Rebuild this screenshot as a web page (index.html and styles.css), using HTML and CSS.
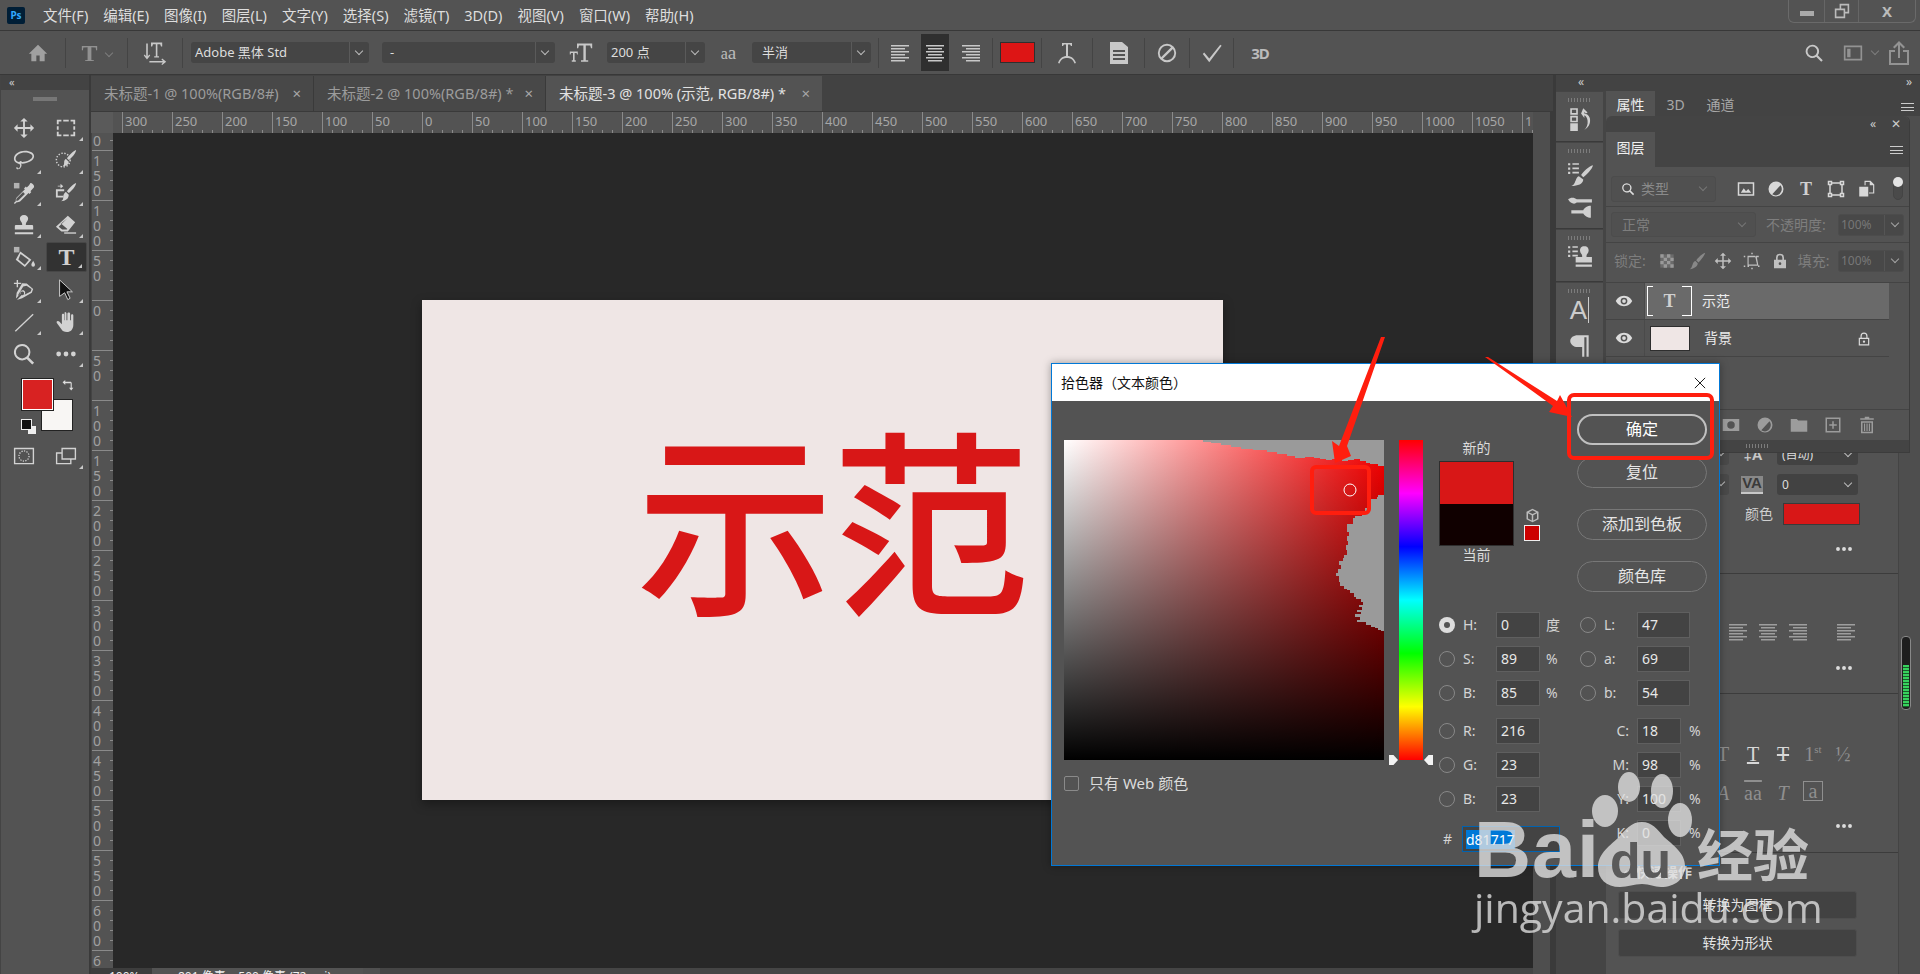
FILE: index.html
```html
<!DOCTYPE html>
<html lang="zh">
<head>
<meta charset="utf-8">
<title>Photoshop 拾色器</title>
<link rel="stylesheet" href="styles.css">
</head>
<body>
<svg class="sprite" aria-hidden="true">
  <symbol id="i-home" viewBox="0 0 24 24"><path d="M12 2 23 13h-3v9h-6v-7h-4v7H4v-9H1z"/></symbol>
  <symbol id="i-orient" viewBox="0 0 30 30"><path d="M4 3h2v16l2-2 1 1-4 5-4-5 1-1 2 2zM10 2h14v5h-1.500l-1-3H18v15h2v1.500h-6V19h2V4h-3.500l-1 3H10zM8 25h17l-2-2 1-1 5 4-5 4-1-1 2-2H8z"/></symbol>
  <symbol id="i-size" viewBox="0 0 30 30"><path d="M10 3h19v6h-1.500l-1-3.500H21V24h3v2h-9v-2h3V5.500h-5.500l-1 3.500H10zM1 13h10v4h-1l-.5-2H7v9h1.500v2h-5v-2H5v-9H2.500L2 17H1z"/></symbol>
  <symbol id="i-alignl" viewBox="0 0 20 20"><path d="M1 2h18v1.500H1zM1 5h14v1.500H1zM1 8h18v1.500H1zM1 11h14v1.500H1zM1 14h18v1.500H1zM1 17h14v1.500H1z"/></symbol>
  <symbol id="i-alignc" viewBox="0 0 20 20"><path d="M1 2h18v1.500H1zM3 5h14v1.500H3zM1 8h18v1.500H1zM3 11h14v1.500H3zM1 14h18v1.500H1zM3 17h14v1.500H3z"/></symbol>
  <symbol id="i-alignr" viewBox="0 0 20 20"><path d="M1 2h18v1.500H1zM5 5h14v1.500H5zM1 8h18v1.500H1zM5 11h14v1.500H5zM1 14h18v1.500H1zM5 17h14v1.500H5z"/></symbol>
  <symbol id="i-warp" viewBox="0 0 24 24"><path d="M7 2h10v3h-1l-1-1.500h-2v11.500h-2V3.500H9L8 5H7zM3 22c2-6 6-7 9-7s7 1 9 7l-1.500.5C18 18 15 17 12 17s-6 1-7.500 5.500z"/></symbol>
  <symbol id="i-panel" viewBox="0 0 24 24"><path d="M3 1h12l6 5v17H3zM6 9v2h12V9zm0 4v2h12v-2zm0 4v2h12v-2z" fill-rule="evenodd"/></symbol>
  <symbol id="i-cancel" viewBox="0 0 24 24"><path d="M12 2a10 10 0 1 0 0 20 10 10 0 0 0 0-20zm0 2.200c1.700 0 3.200.5 4.500 1.400L5.600 16.500A7.800 7.800 0 0 1 12 4.200zm0 15.600c-1.700 0-3.200-.5-4.500-1.400L18.400 7.500A7.800 7.800 0 0 1 12 19.800z"/></symbol>
  <symbol id="i-check" viewBox="0 0 24 24"><path d="M2 13l1.500-1.500L9 18 21 3l1.500 1.200L9 22z"/></symbol>
  <symbol id="i-search" viewBox="0 0 24 24"><path d="M10 2a8 8 0 1 0 4.700 14.500l6 6 1.800-1.800-6-6A8 8 0 0 0 10 2zm0 2.200a5.800 5.800 0 1 1 0 11.600 5.800 5.800 0 0 1 0-11.600z"/></symbol>
  <symbol id="i-work" viewBox="0 0 24 24"><path d="M1 3h22v18H1zm2 2v14h18V5zm2 2h4v10H5z" fill-rule="evenodd"/></symbol>
  <symbol id="i-share" viewBox="0 0 24 24"><path d="M12 0l6 6-1.500 1.500L13 4v13h-2V4L7.500 7.500 6 6zM2 9h6v2H4v11h16V11h-4V9h6v15H2z"/></symbol>
  <symbol id="i-restore" viewBox="0 0 20 20"><path d="M7 1h12v12h-5v6H1V7h6zm2 2v4h5v4h3V3zM3 9v8h9V9z" fill-rule="evenodd"/></symbol>
  <symbol id="i-move" viewBox="0 0 24 24"><path d="M12 1l4 4h-3v6h6V8l4 4-4 4v-3h-6v6h3l-4 4-4-4h3v-6H5v3l-4-4 4-4v3h6V5H8z"/></symbol>
  <symbol id="i-marquee" viewBox="0 0 24 24"><path d="M2 3h5v2H4v3H2zm7 0h6v2H9zm8 0h5v5h-2V5h-3zM2 10h2v4H2zm18 0h2v4h-2zM2 16h2v3h3v2H2zm18 0h2v5h-5v-2h3zM9 19h6v2H9z"/></symbol>
  <symbol id="i-lasso" viewBox="0 0 24 24"><path d="M13 2c6 0 10 2.500 10 6 0 4.500-7 8-13 8-.4 0-.8 0-1.200-.1.600 1 .7 2.300.2 3.300-.5 1.600-2 3-3.500 3S3 21 4 19.500l1.200.8c-.5.600 0 .9.500.9.800 0 1.700-.9 2-2 .3-1 0-2-.8-2.800C4 15.500 1 13.500 1 10.500 1 5.500 7 2 13 2zm0 1.800c-5 0-10.200 3-10.200 6.700 0 2 1.800 3.500 4.200 3.800L7 14c.6-1 2-1.200 2.600-.2l.4.400c5 0 11.200-3 11.200-6.200 0-2.300-3.500-4.200-8.200-4.200z"/></symbol>
  <symbol id="i-qsel" viewBox="0 0 24 24"><circle cx="9" cy="12" r="7.500" fill="none" stroke="currentColor" stroke-width="1.600" stroke-dasharray="1.500 1.800"/><path d="M23 1c0 3-5 9-8 11l-2-2c2-3 7-8 10-9zM12 11l3 3c0 3-3 5-7 5 2-1 2-3 2-5 0-1 1-3 2-3z"/></symbol>
  <symbol id="i-dropper" viewBox="0 0 24 24"><path d="M19 1c2 0 4 2 4 4 0 1-1 2-2 3l-2 2 1 1-2 2-1-1-9 9c-1 1-3 1-4 1l-2 2-1-1 2-2c0-1 0-3 1-4l9-9-1-1 2-2 1 1 2-2c1-1 2-3 2-3zM11 11l-7 7c-.5.5-.5 1.500-.5 2.500 1 0 2 0 2.500-.5l7-7z"/><path d="M1 1h6v6H1z" opacity=".75"/></symbol>
  <symbol id="i-heal" viewBox="0 0 24 24"><path d="M23 1c0 3-5 9-8 11l-2-2c2-3 7-8 10-9zM12 11l3 3c0 4-3 7-9 7 3-1 3-3 3-5 0-2 2-5 3-5z"/><path d="M1 8h9v2H3v5h6v2H1zM6 2l3 2.500L6 7V5H3V4h3z"/></symbol>
  <symbol id="i-stamp" viewBox="0 0 24 24"><path d="M12 1c3 0 4.500 2 4.500 4 0 3-2.500 4-2.500 6v1h7c1 0 1 1 1 2v3H2v-3c0-1 0-2 1-2h7v-1c0-2-2.500-3-2.500-6 0-2 1.500-4 4.500-4zM2 20h20v2H2z"/></symbol>
  <symbol id="i-erase" viewBox="0 0 24 24"><path d="M14 2l8 7-8 10H7l-6-5zM13.500 4.500 4 13.800l3.800 3.200H13l.5-.6-7-6-.5.500z" fill-rule="evenodd"/><path d="M10 20h13v1.500H10z"/></symbol>
  <symbol id="i-bucket" viewBox="0 0 24 24"><path d="M8 6l12 9-7 8-10-8zM8.300 8.700 5.800 14.700l7 5.800 4.500-5.200z" fill-rule="evenodd"/><path d="M22 16c1 2 2 3 2 4.500a2 2 0 0 1-4 0c0-1.500 1-2.500 2-4.500z"/><path d="M1 1h6v6H1z" opacity=".75"/></symbol>
  <symbol id="i-pen" viewBox="0 0 24 24"><path d="M15 5l7 6-1.500 4L10 21l-6 2 .5-.5 5-5a2 2 0 1 0-1.300-1.300l-5 5L4 15l6-10.500zM14.800 7.300l-3.600 1L6 16.500l-.5 2 2-2a3.500 3.500 0 0 1 4.200-4.200 3.500 3.500 0 0 1 .9 4.800l6.800-3.500.8-2.700z" fill-rule="evenodd"/><path d="M4 1h1.500v3H9v1.500H5.500V9H4V5.500H1V4h3z"/></symbol>
  <symbol id="i-arrow" viewBox="0 0 24 24"><path d="M5 1l14 13h-6l3.500 7-2.500 1.500-3.500-7.500L5 19z" fill="#111" stroke="#d8d8d8" stroke-width="1"/></symbol>
  <symbol id="i-line" viewBox="0 0 24 24"><path d="M2 21.500 21.500 3l1 1L3 22.500z"/></symbol>
  <symbol id="i-hand" viewBox="0 0 24 24"><path d="M11 1c1 0 1.500 1 1.500 1.500V10h1V3c0-1 .8-1.500 1.500-1.500S16.500 2 16.500 3v7h1V5c0-1 .6-1.500 1.300-1.500S20 4 20 5v10c0 5-3 8-7 8-3 0-5-1-6-3l-5-7c-.6-1 0-2 1-2 1.500 0 3 2 4.500 3.500V4.500C7.500 3.500 8 3 9 3c.7 0 1 .5 1 1.500V10h.5V2.500c0-1 .3-1.500.5-1.500z"/></symbol>
  <symbol id="i-zoom" viewBox="0 0 24 24"><path d="M10 1a9 9 0 1 0 5 16.500l6 6 2-2-6-6A9 9 0 0 0 10 1zm0 2.200a6.800 6.800 0 1 1 0 13.600 6.800 6.800 0 0 1 0-13.600z"/></symbol>
  <symbol id="i-dots" viewBox="0 0 24 24"><circle cx="4" cy="12" r="2.600"/><circle cx="12" cy="12" r="2.600"/><circle cx="20" cy="12" r="2.600"/></symbol>
  <symbol id="i-swap" viewBox="0 0 24 24"><path d="M1 6l5-4v3h9c2 0 3 1 3 3v8h3l-4 5-4-5h3V8H6v3z"/></symbol>
  <symbol id="i-qmask" viewBox="0 0 24 24"><path d="M1 3h22v18H1zm1.500 1.500v15h19v-15z" fill-rule="evenodd"/><circle cx="12" cy="12" r="5.500" fill="none" stroke="currentColor" stroke-width="1.400" stroke-dasharray="1.400 1.400"/></symbol>
  <symbol id="i-screen" viewBox="0 0 24 24"><path d="M7 3h16v13h-5v5H1V8h6zm1.500 1.500v10h13v-10zM2.500 9.500v10h14V16H7V9.500z" fill-rule="evenodd"/></symbol>
  <symbol id="i-history" viewBox="0 0 24 24"><path d="M3 2h7v6H3zm1.500 1.500v3h4v-3zM3 9h7v6H3zm1.500 1.500v3h4v-3zM3 16h7v7H3zM15 2l4 4-1.500 1L16 5.500V7c5 1 6 5 5 9-.7 3-3 5-5 6 2-2 3.500-5 3-8.500-.3-2.500-1.500-4.500-3-5V11l-3-4z" fill-rule="evenodd"/></symbol>
  <symbol id="i-brushlist" viewBox="0 0 24 24"><path d="M1 2h2v2H1zm4 0h6v1.500H5zM1 6h2v2H1zm4 0h6v1.500H5zM1 10h2v2H1zm4 0h6v1.500H5zM24 4c-1 4-6 9-9 11l-2-2c2-3 7-8 11-9zM11 14l4 3c0 4-5 6-11 6 3-1 3-3 4-5 .5-2 2-4 3-4z"/></symbol>
  <symbol id="i-brushset" viewBox="0 0 24 24"><path d="M1 4c2-2 6-2 8 0h14v3H9c-2 2-6 1-8-3zM22 10v11c-3 0-6-2-7-4H4v-3h11c1-2 4-4 7-4z"/></symbol>
  <symbol id="i-stamplist" viewBox="0 0 24 24"><path d="M1 2h2v2H1zm4 0h5v1.500H5zM1 6h2v2H1zm4 0h5v1.500H5zM1 10h2v2H1zm4 0h5v1.500H5zM16 2c3 0 4 2 4 4 0 2.500-2 3-2 5v1h5v5H8v-5h6v-1c0-2-2-2.500-2-5 0-2 1-4 4-4zM8 19h15v2H8z"/></symbol>
  <symbol id="i-para" viewBox="0 0 24 24"><path d="M10 2h10v20h-2V4h-2v18h-2v-9h-4C6 13 3 10 3 7.500 3 4 6 2 10 2z"/></symbol>
  <symbol id="i-img" viewBox="0 0 24 24"><path d="M1 3h22v18H1zm2 2v14h18V5z" fill-rule="evenodd"/><path d="M5 17l4-6 3 4 3-3 4 5z"/></symbol>
  <symbol id="i-adj" viewBox="0 0 24 24"><path d="M12 2a10 10 0 1 1 0 20 10 10 0 0 1 0-20zm6 5L7 19c1.500 1 3 1.500 5 1.500a8.500 8.500 0 0 0 6-13.500z" fill-rule="evenodd"/></symbol>
  <symbol id="i-shape" viewBox="0 0 24 24"><path d="M1 1h6v2h10V1h6v6h-2v10h2v6h-6v-2H7v2H1v-6h2V7H1zm2 2v2h2V3zm16 0v2h2V3zM7 5v2H5v10h2v2h10v-2h2V7h-2V5zM3 19v2h2v-2zm16 0v2h2v-2z" fill-rule="evenodd"/></symbol>
  <symbol id="i-smart" viewBox="0 0 24 24"><path d="M10 1h8l5 5v12h-7v-1.500h5.500V7H17V2.500h-5.500V7H10z"/><path d="M3 9h12v13H3z"/></symbol>
  <symbol id="i-eye" viewBox="0 0 24 24"><path d="M12 5c5.500 0 9.500 4 11 7-1.500 3-5.500 7-11 7S2.500 15 1 12c1.500-3 5.500-7 11-7zm0 2.500a4.500 4.500 0 1 0 0 9 4.500 4.500 0 0 0 0-9zM12 9.500a2.500 2.500 0 1 1 0 5 2.500 2.500 0 0 1 0-5z" fill-rule="evenodd"/></symbol>
  <symbol id="i-checker" viewBox="0 0 24 24"><path d="M2 2h20v20H2z" opacity=".35"/><path d="M2 2h5v5H2zm10 0h5v5h-5zM7 7h5v5H7zm10 0h5v5h-5zM2 12h5v5H2zm10 0h5v5h-5zM7 17h5v5H7zm10 0h5v5h-5z"/></symbol>
  <symbol id="i-brush" viewBox="0 0 24 24"><path d="M23 1c-1 4-6 10-9 13l-3-3c3-4 8-9 12-10zM10 12l3 3c0 4-4 7-11 8 3-1 3-4 4-6 .7-3 2.500-5 4-5z"/></symbol>
  <symbol id="i-artboard" viewBox="0 0 24 24"><path d="M1 5h2v2H1zm5 0h10l1 1.500V5h4v2h-2.500l2 11H22v2h-2v-1.600H8V20H6zm1.500 2v9.800h11.200L16.500 7zM1 18h2v2H1zM11 1h2v2h-2zM11 21h2v2h-2z" fill-rule="evenodd"/></symbol>
  <symbol id="i-lock" viewBox="0 0 24 24"><path d="M12 1a6 6 0 0 1 6 6v3h3v13H3V10h3V7a6 6 0 0 1 6-6zm0 2.500A3.500 3.500 0 0 0 8.500 7v3h7V7A3.500 3.500 0 0 0 12 3.500zM12 14a2 2 0 1 0 0 4 2 2 0 0 0 0-4z" fill-rule="evenodd"/></symbol>
  <symbol id="i-locko" viewBox="0 0 24 24"><path d="M12 1a6 6 0 0 1 6 6v3h3v13H3V10h3V7a6 6 0 0 1 6-6zm0 2A4 4 0 0 0 8 7v3h8V7a4 4 0 0 0-4-4zM5 12v9h14v-9zm7 2.500a2 2 0 1 1 0 4 2 2 0 0 1 0-4z" fill-rule="evenodd"/></symbol>
  <symbol id="i-mask" viewBox="0 0 24 24"><path d="M1 4h22v16H1zm11 3a5 5 0 1 0 0 10 5 5 0 0 0 0-10z" fill-rule="evenodd"/></symbol>
  <symbol id="i-folder" viewBox="0 0 24 24"><path d="M1 4h8l2 2h12v15H1z"/></symbol>
  <symbol id="i-new" viewBox="0 0 24 24"><path d="M2 2h20v20H2zm2 2v16h16V4zm7 3h2v4h4v2h-4v4h-2v-4H7v-2h4z" fill-rule="evenodd"/></symbol>
  <symbol id="i-trash" viewBox="0 0 24 24"><path d="M9 1h6v2h6v2H3V3h6zM4 7h16v16H4zm2 2v12h12V9zm2 1h1.500v10H8zm3.300 0h1.500v10h-1.500zM14.500 10H16v10h-1.500z" fill-rule="evenodd"/></symbol>
  <symbol id="i-cube" viewBox="0 0 20 20"><path d="M10 1l8 4v10l-8 4-8-4V5zm0 2L5 5.500 10 8l5-2.500zM4 7v7l5 2.500v-7zm12 0-5 2.500v7l5-2.500z" fill-rule="evenodd"/></symbol>
</svg>

<header class="menubar">
  <div class="pslogo">Ps</div>
  <nav class="menus">
    <span>文件(F)</span><span>编辑(E)</span><span>图像(I)</span><span>图层(L)</span><span>文字(Y)</span><span>选择(S)</span><span>滤镜(T)</span><span>3D(D)</span><span>视图(V)</span><span>窗口(W)</span><span>帮助(H)</span>
  </nav>
  <div class="winctl">
    <span class="wc wc-min"><i class="minbar"></i></span>
    <span class="wc wc-res"><svg class="ic16"><use href="#i-restore"/></svg></span>
    <span class="wc wc-close">X</span>
  </div>
</header>

<section class="optbar">
  <div class="cell c-home"><svg class="ic20"><use href="#i-home"/></svg></div>
  <div class="cell c-tool"><span class="serif-t dim">T</span><span class="chev dim2"></span></div>
  <div class="cell c-orient"><svg class="ic24"><use href="#i-orient"/></svg></div>
  <div class="sel sel-font"><span>Adobe 黑体 Std</span><b class="chev"></b></div>
  <div class="sel sel-style"><span>-</span><b class="chev"></b></div>
  <div class="cell c-sizeic"><svg class="ic24"><use href="#i-size"/></svg></div>
  <div class="sel sel-size"><span>200 点</span><b class="chev"></b></div>
  <div class="cell c-aa"><span class="aa">a<small>a</small></span></div>
  <div class="sel sel-aa"><span>半消</span><b class="chev"></b></div>
  <div class="cell c-al"><svg class="ic20"><use href="#i-alignl"/></svg></div>
  <div class="cell c-ac"><svg class="ic20"><use href="#i-alignc"/></svg></div>
  <div class="cell c-ar"><svg class="ic20"><use href="#i-alignr"/></svg></div>
  <div class="optswatch"></div>
  <div class="cell c-warp"><svg class="ic24"><use href="#i-warp"/></svg></div>
  <div class="cell c-panel"><svg class="ic24"><use href="#i-panel"/></svg></div>
  <div class="cell c-cancel"><svg class="ic22"><use href="#i-cancel"/></svg></div>
  <div class="cell c-commit"><svg class="ic22"><use href="#i-check"/></svg></div>
  <div class="cell c-3d"><span class="td">3D</span></div>
  <div class="optright">
    <svg class="ic20"><use href="#i-search"/></svg>
    <svg class="ic20 dimi"><use href="#i-work"/></svg>
    <span class="chev dim2"></span>
    <svg class="ic24 dimi"><use href="#i-share"/></svg>
  </div>
</section>

<main class="main">
  <aside class="toolbar">
    <div class="collapse">«</div>
    <div class="grip"></div>
    <div class="tools">
      <div class="tool"><svg class="ic22"><use href="#i-move"/></svg></div>
      <div class="tool"><svg class="ic22"><use href="#i-marquee"/></svg><i class="corner"></i></div>
      <div class="tool"><svg class="ic22"><use href="#i-lasso"/></svg><i class="corner"></i></div>
      <div class="tool"><svg class="ic22"><use href="#i-qsel"/></svg><i class="corner"></i></div>
      <div class="tool"><svg class="ic22"><use href="#i-dropper"/></svg><i class="corner"></i></div>
      <div class="tool"><svg class="ic22"><use href="#i-heal"/></svg><i class="corner"></i></div>
      <div class="tool"><svg class="ic22"><use href="#i-stamp"/></svg><i class="corner"></i></div>
      <div class="tool"><svg class="ic22"><use href="#i-erase"/></svg><i class="corner"></i></div>
      <div class="tool"><svg class="ic22"><use href="#i-bucket"/></svg><i class="corner"></i></div>
      <div class="tool tool-on"><span class="serif-t">T</span><i class="corner"></i></div>
      <div class="tool"><svg class="ic22"><use href="#i-pen"/></svg><i class="corner"></i></div>
      <div class="tool"><svg class="ic22"><use href="#i-arrow"/></svg><i class="corner"></i></div>
      <div class="tool"><svg class="ic22"><use href="#i-line"/></svg><i class="corner"></i></div>
      <div class="tool"><svg class="ic22"><use href="#i-hand"/></svg><i class="corner"></i></div>
      <div class="tool"><svg class="ic22"><use href="#i-zoom"/></svg></div>
      <div class="tool"><svg class="ic22"><use href="#i-dots"/></svg><i class="corner"></i></div>
    </div>
    <div class="wells">
      <div class="well-bg"></div>
      <div class="well-fg"></div>
      <svg class="well-swap"><use href="#i-swap"/></svg>
      <div class="well-def-b"></div>
      <div class="well-def-f"></div>
    </div>
    <div class="tools">
      <div class="tool"><svg class="ic22"><use href="#i-qmask"/></svg></div>
      <div class="tool"><svg class="ic22"><use href="#i-screen"/></svg><i class="corner"></i></div>
    </div>
  </aside>

  <div class="center">
    <div class="tabs">
      <div class="tab tab-1">未标题-1 @ 100%(RGB/8#)<em>×</em></div>
      <div class="tab tab-2">未标题-2 @ 100%(RGB/8#) *<em>×</em></div>
      <div class="tab tab-3">未标题-3 @ 100% (示范, RGB/8#) *<em>×</em></div>
    </div>
    <div class="workrow">
      <div class="work">
        <div class="rtop">
          <div class="rcorner"></div>
          <div class="rlead"></div>
          <span>300</span><span>250</span><span>200</span><span>150</span><span>100</span><span>50</span><span>0</span><span>50</span><span>100</span><span>150</span><span>200</span><span>250</span><span>300</span><span>350</span><span>400</span><span>450</span><span>500</span><span>550</span><span>600</span><span>650</span><span>700</span><span>750</span><span>800</span><span>850</span><span>900</span><span>950</span><span>1000</span><span>1050</span><span>1100</span>
        </div>
        <div class="canvasrow">
          <div class="rleft">
            <span>200</span><span>150</span><span>100</span><span>50</span><span>0</span><span>50</span><span>100</span><span>150</span><span>200</span><span>250</span><span>300</span><span>350</span><span>400</span><span>450</span><span>500</span><span>550</span><span>600</span><span>650</span>
          </div>
          <div class="pasteboard">
            <div class="doc"><div class="doctext">示范</div></div>
          </div>
        </div>
        <div class="status">
          <span class="st-zoom">100%</span>
          <span class="st-info">801 像素 x 500 像素 (72 ppi)</span>
          <span class="st-btn"></span>
        </div>
      </div>
      <div class="gutter"></div>
    </div>
  </div>

  <aside class="dock">
    <div class="dockhead">«</div>
    <div class="dgroup dg1"><i class="dgrip"></i><svg class="ic26"><use href="#i-history"/></svg></div>
    <div class="dgroup dg2"><i class="dgrip"></i><svg class="ic26"><use href="#i-brushlist"/></svg><svg class="ic26"><use href="#i-brushset"/></svg></div>
    <div class="dgroup dg3"><i class="dgrip"></i><svg class="ic26"><use href="#i-stamplist"/></svg></div>
    <div class="dgroup dg4"><i class="dgrip"></i><span class="da">A<u></u></span><svg class="ic26"><use href="#i-para"/></svg></div>
  </aside>

  <aside class="right">
    <div class="righthead">»</div>
    <div class="rtabs"><span class="rt on">属性</span><span class="rt t3d">3D</span><span class="rt">通道</span><i class="ham"></i></div>
    <div class="props">
      <div class="prow prow-lead">
        <div class="mini"><b class="chev"></b></div>
        <span class="ric ric-lead">‡A</span>
        <div class="pinput pval"><span>(自动)</span><b class="chev"></b></div>
      </div>
      <div class="prow prow-va">
        <div class="mini"><b class="chev"></b></div>
        <span class="ric ric-va">VA</span>
        <div class="pinput"><span>0</span><b class="chev"></b></div>
      </div>
      <div class="prow prow-color"><span class="lbl">颜色</span><div class="pswatch"></div></div>
      <div class="more"><svg class="ic18"><use href="#i-dots"/></svg></div>
      <div class="psec psec-par">
        <div class="aligns">
          <svg class="ic20 dimi"><use href="#i-alignl"/></svg><svg class="ic20 dimi"><use href="#i-alignc"/></svg><svg class="ic20 dimi"><use href="#i-alignr"/></svg><svg class="ic20 dimi al-gap"><use href="#i-alignl"/></svg>
        </div>
        <div class="more more2"><svg class="ic18"><use href="#i-dots"/></svg></div>
      </div>
      <div class="psec psec-type">
        <div class="tyrow"><span class="ty">T</span><span class="ty u">T</span><span class="ty s">T</span><span class="ty">1<sup>st</sup></span><span class="ty">½</span></div>
        <div class="tyrow tyrow2"><span class="ty it">A</span><span class="ty over">aa</span><span class="ty it">T</span><span class="ty box">a</span></div>
        <div class="more more3"><svg class="ic18"><use href="#i-dots"/></svg></div>
      </div>
      <div class="quick">
        <div class="qhead"><b class="chev"></b>快速操作</div>
        <div class="qbtn">转换为图框</div>
        <div class="qbtn">转换为形状</div>
      </div>
    </div>
    <div class="rail"><div class="slider"><i></i></div></div>

    <div class="layers">
      <div class="lhead"><span>«</span><span class="lx">✕</span></div>
      <div class="ltabs"><span class="lt">图层</span><i class="ham"></i></div>
      <div class="lfilter">
        <div class="lsearch"><svg class="ic14"><use href="#i-search"/></svg><span>类型</span><b class="chev"></b></div>
        <div class="lficons">
          <svg class="ic18"><use href="#i-img"/></svg>
          <svg class="ic18"><use href="#i-adj"/></svg>
          <span class="serif-t small">T</span>
          <svg class="ic18"><use href="#i-shape"/></svg>
          <svg class="ic18"><use href="#i-smart"/></svg>
        </div>
        <div class="toggle"></div>
      </div>
      <div class="lblend">
        <div class="lsel"><span>正常</span><b class="chev"></b></div>
        <span class="llbl">不透明度:</span>
        <div class="lnum"><span>100%</span><b class="chev"></b></div>
      </div>
      <div class="llock">
        <span class="llbl lock-l">锁定:</span>
        <svg class="ic16 lock-1"><use href="#i-checker"/></svg>
        <svg class="ic18 lock-2"><use href="#i-brush"/></svg>
        <svg class="ic18 lock-3"><use href="#i-move"/></svg>
        <svg class="ic18 lock-4"><use href="#i-artboard"/></svg>
        <svg class="ic16 lock-5"><use href="#i-lock"/></svg>
        <span class="llbl lock-f">填充:</span>
        <div class="lnum"><span>100%</span><b class="chev"></b></div>
      </div>
      <div class="llist">
        <div class="layer">
          <svg class="ic18 leye"><use href="#i-eye"/></svg>
          <div class="lmain lmain-on">
            <div class="thumb-t"><span class="serif-t small">T</span></div>
            <span class="lname">示范</span>
          </div>
        </div>
        <div class="layer">
          <svg class="ic18 leye"><use href="#i-eye"/></svg>
          <div class="lmain">
            <div class="thumb-bg"></div>
            <span class="lname lname-bg">背景</span>
            <svg class="ic14 llockic"><use href="#i-locko"/></svg>
          </div>
        </div>
      </div>
      <div class="lfoot">
        <svg class="ic18"><use href="#i-mask"/></svg>
        <svg class="ic18"><use href="#i-adj"/></svg>
        <svg class="ic18"><use href="#i-folder"/></svg>
        <svg class="ic18"><use href="#i-new"/></svg>
        <svg class="ic18"><use href="#i-trash"/></svg>
      </div>
      <div class="lgrip"><i class="dgrip"></i></div>
    </div>
  </aside>
</main>

<div class="dialog">
  <div class="dtitle"><span>拾色器（文本颜色）</span><svg class="dclose" viewBox="0 0 14 14"><path d="M1 1l12 12M13 1 1 13"/></svg></div>
  <div class="dbody">
    <div class="dleft">
      <div class="field">
        <svg class="gamut" viewBox="0 0 320 320">
          <polygon class="gray" points="139,0 139,2 147,2 147,3 157,3 157,5 167,5 167,7 177,7 177,9 189,9 189,10 203,10 203,12 213,12 213,14 223,14 223,16 231,16 231,18 241,18 241,17 250,17 250,18 256,18 256,19 262,19 262,20 268,20 268,19 272,19 272,20 278,20 278,21 284,21 284,20 290,20 290,19 296,19 296,21 302,21 302,23 306,23 306,24 314,24 314,26 320,26 320,0"/>
          <polygon class="gray" points="320,55 314,55 314,57 313,57 313,59 306,59 306,66 303,66 303,68 301,68 301,72 298,72 298,76 291,76 291,78 289,78 289,84 283,84 283,92 285,92 285,96 283,96 283,101 284,101 284,105 282,105 282,110 283,110 283,115 280,115 280,118 279,118 279,121 275,121 275,125 277,125 277,129 274,129 274,133 272,133 272,136 275,136 275,142 276,142 276,146 280,146 280,149 283,149 283,150 286,150 286,153 290,153 290,157 292,157 292,159 297,159 297,162 299,162 299,165 295,165 295,167 298,167 298,170 293,170 293,172 297,172 297,174 291,174 291,177 296,177 296,180 293,180 293,182 302,182 302,185 307,185 307,187 311,187 311,188 314,188 314,190 317,190 317,191 320,191"/>
        </svg>
      </div>
      <label class="webonly"><i class="cbx"></i><span>只有 Web 颜色</span></label>
    </div>
    <div class="hue"><i class="tri tri-l"></i><i class="tri tri-r"></i></div>
    <div class="dright">
      <div class="dtop">
        <div class="swatches">
          <div class="swlabel sw-new">新的</div>
          <div class="swrow">
            <div class="swbox"><div class="sw-a"></div><div class="sw-b"></div></div>
            <div class="swaux"><svg class="ic16 cube"><use href="#i-cube"/></svg><i class="websw"></i></div>
          </div>
          <div class="swlabel">当前</div>
        </div>
        <div class="dbtns">
          <div class="dbtn dbtn-on">确定</div>
          <div class="dbtn">复位</div>
          <div class="dbtn">添加到色板</div>
          <div class="dbtn">颜色库</div>
        </div>
      </div>
      <div class="fields">
        <div class="fcol">
          <div class="fr"><i class="radio on"></i><span class="fl">H:</span><span class="fi">0</span><span class="fu">度</span></div>
          <div class="fr"><i class="radio"></i><span class="fl">S:</span><span class="fi">89</span><span class="fu">%</span></div>
          <div class="fr fr-gap"><i class="radio"></i><span class="fl">B:</span><span class="fi">85</span><span class="fu">%</span></div>
          <div class="fr"><i class="radio"></i><span class="fl">R:</span><span class="fi">216</span></div>
          <div class="fr"><i class="radio"></i><span class="fl">G:</span><span class="fi">23</span></div>
          <div class="fr fr-gap2"><i class="radio"></i><span class="fl">B:</span><span class="fi">23</span></div>
          <div class="fr fr-hex"><span class="hash">#</span><span class="hexin"><span class="hexsel">d81717</span></span></div>
        </div>
        <div class="fcol fcol2">
          <div class="fr"><i class="radio"></i><span class="fl">L:</span><span class="fi fi-w">47</span></div>
          <div class="fr"><i class="radio"></i><span class="fl">a:</span><span class="fi fi-w">69</span></div>
          <div class="fr fr-gap"><i class="radio"></i><span class="fl">b:</span><span class="fi fi-w">54</span></div>
          <div class="fr"><span class="fc">C:</span><span class="fi">18</span><span class="fp">%</span></div>
          <div class="fr"><span class="fc">M:</span><span class="fi">98</span><span class="fp">%</span></div>
          <div class="fr"><span class="fc">Y:</span><span class="fi">100</span><span class="fp">%</span></div>
          <div class="fr"><span class="fc">K:</span><span class="fi">0</span><span class="fp">%</span></div>
        </div>
      </div>
    </div>
  </div>
</div>

<svg class="overlay" viewBox="0 0 1920 974">
  <circle class="pick" cx="1350" cy="490" r="6"/>
  <rect class="redbox" x="1312" y="467" width="57" height="46" rx="4"/>
  <rect class="redbox" x="1569" y="395" width="143" height="63" rx="5"/>
  <path class="redarrow" d="M1381 337h4L1347 446 1351 456 1335 463 1332 441 1339 446z"/>
  <path class="redarrow" d="M1485 357h3L1557 401 1560 395 1572 417 1549 412 1553 406z"/>
  <g class="wm">
    <ellipse cx="1629" cy="787" rx="11" ry="15"/>
    <ellipse cx="1662" cy="791" rx="11" ry="17"/>
    <ellipse cx="1605" cy="811" rx="13" ry="16"/>
    <ellipse cx="1680" cy="820" rx="12" ry="17"/>
    <path d="M1642 822c10 0 15 7 22 15 9 8 21 16 21 29 0 13-10 21-24 21-7 0-11-3-19-3s-14 3-22 3c-14 0-22-8-22-20 0-14 13-22 21-30 6-7 12-15 23-15z"/>
    <text class="wm-baidu" x="1474" y="877">Bai</text>
    <text class="wm-du" x="1610" y="878">du</text>
    <text class="wm-cn" x="1697" y="876">经验</text>
    <text class="wm-url" x="1474" y="923">jingyan.baidu.com</text>
  </g>
</svg>
</body>
</html>
```
FILE: styles.css
```css
* { box-sizing: border-box; }
html, body { margin: 0; padding: 0; }
body {
  width: 1920px; height: 974px; overflow: hidden; position: relative;
  background: #535353; color: #dcdcdc;
  font: 13px/1 "Noto Sans", "Noto Sans CJK SC", sans-serif;
  fill: #cfcfcf;
}
.sprite { position: absolute; width: 0; height: 0; }
svg { fill: currentColor; display: block; flex: none; }
.ic14 { width: 14px; height: 14px; }
.ic16 { width: 16px; height: 16px; }
.ic18 { width: 18px; height: 18px; }
.ic20 { width: 20px; height: 20px; }
.ic22 { width: 22px; height: 22px; }
.ic24 { width: 24px; height: 24px; }
.ic26 { width: 26px; height: 26px; }
.dimi { opacity: .55; }
.dim { opacity: .5; }
.dim2 { opacity: .4; }
.serif-t { font: 700 24px/1 "Liberation Serif", serif; color: #d0d0d0; }
.serif-t.small { font-size: 18px; }
.chev {
  display: inline-block; width: 6px; height: 6px; flex: none;
  border-right: 1px solid #bbb; border-bottom: 1px solid #bbb;
  transform: rotate(45deg);
}

/* menu */
.menubar { height: 31px; display: flex; align-items: flex-start; padding-left: 7px; border-bottom: 1px solid #383838; background: #535353; }
.pslogo {
  width: 18px; height: 17px; margin-top: 7px; background: #001e36; color: #31a8ff; border-radius: 2px;
  font: 700 10px/17px "Noto Sans", sans-serif; text-align: center;
}
.menus { display: flex; margin-left: 18px; gap: 15px; color: #dedede; font-size: 14.5px; }
.menus span { line-height: 30px; white-space: nowrap; }
.winctl {
  margin-left: auto; margin-right: 4px; width: 128px; height: 23px; display: flex;
  border: 1px solid #6a6a6a; border-top: 0; border-radius: 0 0 6px 6px;
}
.wc { display: flex; align-items: center; justify-content: center; color: #bbb; border-right: 1px solid #666; }
.wc-min { width: 36px; }
.wc-res { width: 34px; }
.wc-close { flex: 1; border-right: 0; font: 700 15px "Noto Sans", sans-serif; }
.minbar { width: 14px; height: 5px; background: #aaa; margin-top: 4px; }

/* options */
.optbar { height: 44px; display: flex; align-items: center; border-bottom: 1px solid #383838; padding-left: 10px; background: #535353; }
.cell { display: flex; align-items: center; justify-content: center; height: 30px; color: #c8c8c8; flex: none; border-right: 1px solid #444; gap: 8px; }
.c-home { width: 56px; color: #a0a0a0; }
.c-tool { width: 62px; }
.c-orient { width: 55px; }
.c-sizeic { width: 52px; margin-left: 0; border: 0; }
.c-aa { width: 47px; border: 0; }
.aa { font: 16px "Liberation Serif", serif; color: #bbb; }
.aa small { font-size: 19px; }
.c-al { width: 43px; border: 0; border-left: 1px solid #444; margin-left: 7px; }
.c-ac { width: 28px; height: 37px; background: #2f2f2f; border: 0; }
.c-ar { width: 44px; }
.sel { height: 21px; display: flex; align-items: center; justify-content: space-between; background: #454545; border-radius: 3px; flex: none; padding: 0 7px 0 4px; color: #ddd; font-size: 13px; border-right: 0; position: relative; }
.sel::after { content: ""; position: absolute; right: 19px; top: 0; bottom: 0; width: 1px; background: #5a5a5a; }
.sel .chev { margin-top: -3px; }
.sel-font { width: 178px; margin-left: 8px; }
.sel-style { width: 173px; margin-left: 13px; padding-left: 8px; }
.sel-size { width: 98px; padding-left: 4px; }
.sel-aa { width: 119px; padding-left: 10px; }
.optswatch { width: 35px; height: 21px; margin-left: 7px; margin-right: 6px; background: #dd1515; border: 1px solid #2f2f2f; flex: none; }
.c-warp { width: 52px; border-left: 1px solid #444; }
.c-panel { width: 52px; }
.c-cancel { width: 45px; }
.c-commit { width: 44px; }
.c-3d { width: 52px; border: 0; }
.td { font: 700 15px "Noto Sans", sans-serif; color: #bbb; letter-spacing: -1px; }
.optright { margin-left: auto; margin-right: 9px; display: flex; align-items: center; color: #c8c8c8; gap: 19px; }
.optright .chev { margin: -3px -10px 0 -10px; }

/* main */
.main { height: 899px; display: flex; }
.toolbar { width: 91px; flex: none; background: #535353; border-right: 2px solid #3a3a3a; border-left: 1px solid #444; display: flex; flex-direction: column; }
.collapse { height: 15px; background: #434343; font-size: 11px; line-height: 14px; padding-left: 8px; color: #ccc; }
.grip { height: 22px; background: linear-gradient(#777, #777) center 7px / 24px 4px no-repeat; }
.tools { display: grid; grid-template-columns: 42px 42px; grid-auto-rows: 32.3px; padding-left: 2px; }
.tool { position: relative; display: flex; align-items: center; justify-content: center; color: #d2d2d2; }
.tool-on { background: #323232; border: 1px solid #474747; border-radius: 2px; margin: 1px 0 1px 1px; }
.corner { position: absolute; right: 4px; bottom: 3px; width: 0; height: 0; border-left: 4px solid transparent; border-bottom: 4px solid #c8c8c8; }
.wells { height: 69px; position: relative; }
.well-bg { position: absolute; left: 40px; top: 29px; width: 32px; height: 32px; background: #f8f6f4; border: 1px solid #222; }
.well-fg { position: absolute; left: 21px; top: 9px; width: 31px; height: 31px; background: #d82222; border: 1px solid #fff; outline: 1px solid #222; }
.well-swap { position: absolute; left: 61px; top: 9px; width: 13px; height: 13px; color: #ddd; }
.well-def-b { position: absolute; left: 27px; top: 56px; width: 8px; height: 8px; background: #eee; }
.well-def-f { position: absolute; left: 21px; top: 50px; width: 9px; height: 9px; background: #111; outline: 1px solid #eee; }

.center { width: 1462px; flex: none; display: flex; flex-direction: column; }
.tabs { height: 37px; display: flex; background: #424242; border-bottom: 1px solid #3a3a3a; padding-top: 1px; }
.tab { display: flex; align-items: center; color: #9c9c9c; padding-left: 13px; white-space: nowrap; background: #484848; border-right: 1px solid #3a3a3a; position: relative; flex: none; font-size: 14.5px; }
.tab em { position: absolute; right: 12px; font-style: normal; font-size: 15px; color: #a8a8a8; }
.tab-1 { width: 223px; }
.tab-2 { width: 232px; }
.tab-3 { width: 276px; background: #535353; color: #e2e2e2; border: 0; }
.workrow { flex: 1; display: flex; min-height: 0; }
.work { width: 1442px; flex: none; display: flex; flex-direction: column; overflow: hidden; }
.gutter { flex: 1; background: #4e4e4e; border-right: 3px solid #3a3a3a; }

.rtop { height: 21px; display: flex; flex: none; background: #535353; overflow: hidden; }
.rcorner { width: 22px; flex: none; background: #5a5a5a; }
.rlead { width: 9px; flex: none; }
.rtop span {
  width: 50px; flex: none; border-left: 1px solid #8a8a8a; padding: 3px 0 0 2px; font-size: 13px; color: #a6a6a6;
  background: repeating-linear-gradient(90deg, transparent 0 9px, #8a8a8a 9px 10px) left bottom / 100% 3px no-repeat;
}
.canvasrow { flex: 1; display: flex; min-height: 0; overflow: hidden; }
.rleft { width: 22px; flex: none; background: #535353; border-left: 1px solid #444; overflow: hidden; }
.rleft span {
  display: block; height: 50px; border-top: 1px solid #8a8a8a; padding: 2px 12px 0 1px; font-size: 14px; line-height: 15px;
  color: #a0a0a0; word-break: break-all;
  background: repeating-linear-gradient(180deg, transparent 0 9px, #8a8a8a 9px 10px) right top / 3px 100% no-repeat;
}
.rleft span:first-child { margin-top: -33px; }
.pasteboard { flex: 1; background: #282828; padding: 167px 0 0 309px; }
.doc { width: 801px; height: 500px; background: #efe6e5; box-shadow: 0 4px 10px rgba(0,0,0,.35); padding: 95px 0 0 214px; }
.doctext { color: #d81717; font: 500 198px/1.2 "Noto Sans CJK SC", sans-serif; white-space: nowrap; letter-spacing: -2px; }
.status { height: 6px; flex: none; display: flex; overflow: hidden; background: #454545; font-size: 12px; color: #eee; }
.status span { padding-top: 3px; white-space: nowrap; }
.st-zoom { width: 61px; padding-left: 18px; background: #3d3d3d; }
.st-info { width: 211px; padding-left: 26px; background: #535353; }
.st-btn { width: 17px; background: #505050; }

/* dock */
.dock { width: 53px; flex: none; background: #454545; border-left: 3px solid #3a3a3a; display: flex; flex-direction: column; gap: 1px; }
.dockhead { height: 16px; background: #434343; text-align: center; font-size: 12px; line-height: 14px; color: #ccc; }
.dgroup { background: #535353; display: flex; flex-direction: column; align-items: center; color: #d0d0d0; flex: none; width: 47px; padding-top: 6px; border-bottom: 1px solid #3a3a3a; }
.dg1 { height: 50px; }
.dg2 { height: 86px; gap: 8px; }
.dg1 .dgrip, .dg3 .dgrip { margin-bottom: 4px; }
.dg2 .dgrip { margin-bottom: 0; }
.dg3 { height: 52px; }
.dg4 { height: 120px; border: 0; }
.dg4 .dgrip { margin-bottom: 2px; }
.dgrip { display: block; width: 24px; height: 4px; background: repeating-linear-gradient(90deg, #7c7c7c 0 1px, transparent 1px 3px); flex: none; }
.da { font: 26px/30px "Liberation Sans", sans-serif; color: #ccc; display: flex; margin-bottom: 8px; }
.da u { width: 1px; height: 26px; background: #ccc; margin: 2px 0 0 1px; }

/* right */
.right { flex: 1; position: relative; background: #535353; display: flex; flex-wrap: wrap; align-content: flex-start; }
.righthead { width: 100%; height: 16px; background: #434343; text-align: right; padding-right: 8px; font-size: 12px; line-height: 14px; color: #ccc; }
.rtabs { width: 100%; height: 25px; display: flex; background: #434343; position: relative; }
.rt { padding-top: 7px; width: 49px; text-align: center; color: #a8a8a8; font-size: 14px; }
.rt.on { background: #535353; color: #f0f0f0; }
.t3d { width: 41px; }
.ham { position: absolute; right: 6px; top: 12px; width: 13px; height: 8px; border-top: 1px solid #ccc; border-bottom: 1px solid #ccc; background: linear-gradient(#ccc, #ccc) center / 100% 1px no-repeat; }
.props { width: 293px; height: 858px; border-right: 1px solid #444; padding: 328px 0 0 0; }
.rail { width: 21px; height: 858px; background: #4e4e4e; padding: 520px 0 0 2px; }
.slider { width: 10px; height: 74px; background: #1e1e1e; border: 1px solid #888; border-radius: 4px; padding: 28px 1px 2px; }
.slider i { display: block; height: 100%; background: repeating-linear-gradient(#37d25d 0 2px, #1b5c2c 2px 3px); }
.prow { display: flex; align-items: center; position: relative; }
.prow-lead { height: 21px; margin-bottom: 9px; }
.prow-va { height: 21px; margin-bottom: 8px; }
.mini { width: 123px; height: 21px; background: #4a4a4a; border-radius: 3px; display: flex; justify-content: flex-end; padding: 5px 5px 0 0; }
.ric { width: 48px; text-align: center; font: 700 15px "Liberation Sans", sans-serif; color: #c8c8c8; }
.ric-va { border-bottom: 2px solid #c8c8c8; line-height: 14px; height: 18px; margin: 0 14px 0 12px; width: 22px; background: #888; color: #3a3a3a; }
.pinput { width: 81px; height: 21px; background: #424242; border-radius: 3px; display: flex; align-items: center; justify-content: space-between; padding: 0 7px 0 5px; font-size: 12px; color: #ddd; }
.pinput .chev { margin-top: -3px; }
.prow-color { height: 22px; padding-left: 139px; gap: 10px; font-size: 14px; color: #cfcfcf; }
.pswatch { width: 77px; height: 22px; background: #d81717; border: 1px solid #3a3a3a; }
.more { color: #dcdcdc; display: flex; justify-content: flex-end; padding: 15px 45px 0 0; height: 48px; }
.psec { border-top: 1px solid #3c3c3c; }
.psec-par { height: 120px; padding-top: 48px; }
.aligns { display: flex; padding-left: 122px; gap: 10px; }
.al-gap { margin-left: 18px; }
.more2 { padding-top: 17px; }
.psec-type { height: 159px; padding-top: 48px; }
.tyrow { display: flex; padding-left: 107px; gap: 10px; height: 26px; }
.tyrow2 { margin-top: 13px; }
.ty { width: 20px; text-align: center; font: 20px/24px "Liberation Serif", serif; color: #8f8f8f; white-space: nowrap; }
.ty sup { font-size: 11px; line-height: 0; }
.ty.u { color: #d8d8d8; text-decoration: underline; }
.ty.s { color: #d8d8d8; text-decoration: line-through; }
.it { font-style: italic; }
.over { text-decoration: overline; }
.box { border: 1px solid #8f8f8f; line-height: 18px; height: 20px; }
.more3 { height: 44px; padding-top: 10px; }
.quick { border-top: 1px solid #3c3c3c; padding: 0 0 0 12px; }
.qhead { height: 38px; display: flex; align-items: center; gap: 8px; font-weight: 700; color: #dcdcdc; font-size: 14px; }
.qhead .chev { margin: -3px 2px 0 2px; }
.qbtn { width: 239px; height: 28px; margin-bottom: 10px; background: #424242; border: 1px solid #4e4e4e; border-radius: 3px; text-align: center; font-size: 14px; line-height: 26px; color: #e4e4e4; }

.layers { position: absolute; left: 0; top: 41px; width: 304px; height: 337px; background: #535353; border: 1px solid #3c3c3c; border-top: 0; border-left: 0; display: flex; flex-direction: column; border-radius: 6px 6px 0 0; }
.lhead { height: 16px; background: #444; display: flex; justify-content: flex-end; gap: 15px; padding: 2px 8px 0 0; font-size: 12px; color: #ccc; border-radius: 6px 6px 0 0; flex: none; }
.ltabs { height: 35px; background: #444; position: relative; flex: none; }
.lt { display: block; width: 49px; height: 35px; background: #535353; text-align: center; line-height: 32px; font-size: 14px; color: #f0f0f0; }
.ltabs .ham { top: 14px; right: 6px; }
.lfilter { height: 40px; display: flex; align-items: center; padding: 4px 0 0 5px; border-bottom: 1px solid #444; flex: none; }
.lsearch { width: 105px; height: 26px; border: 1px solid #4c4c4c; border-radius: 3px; display: flex; align-items: center; gap: 6px; padding: 0 9px; color: #ddd; background: #505050; }
.lsearch span { color: #8a8a8a; font-size: 14px; flex: 1; }
.lsearch .chev { opacity: .35; margin-top: -3px; }
.lficons { display: flex; align-items: center; gap: 12px; margin-left: 21px; color: #d8d8d8; }
.lficons .serif-t { width: 18px; text-align: center; }
.toggle { width: 10px; height: 22px; margin-left: 18px; border-radius: 5px; border: 1px solid #444; position: relative; background: #4a4a4a; }
.toggle::before { content: ""; position: absolute; left: -1px; top: -2px; width: 10px; height: 10px; background: #e4e4e4; border-radius: 50%; }
.lblend { height: 36px; display: flex; align-items: center; padding-left: 5px; border-bottom: 1px solid #444; flex: none; }
.lsel { width: 145px; height: 25px; border: 1px solid #4c4c4c; border-radius: 3px; display: flex; align-items: center; justify-content: space-between; padding: 0 10px; color: #7e7e7e; font-size: 14px; background: #505050; }
.lsel .chev { opacity: .35; margin-top: -3px; }
.llbl { color: #7e7e7e; white-space: nowrap; font-size: 14px; }
.lblend .llbl { margin-left: 10px; }
.lnum { width: 66px; height: 22px; margin-left: auto; margin-right: 5px; background: #484848; border: 1px solid #4c4c4c; border-radius: 3px; display: flex; align-items: center; justify-content: space-between; padding: 0 5px 0 2px; color: #777; font-size: 12px; position: relative; }
.lnum::after { content: ""; position: absolute; right: 18px; top: 0; bottom: 0; width: 1px; background: #555; }
.lnum .chev { margin-top: -3px; opacity: .8; }
.llock { height: 40px; display: flex; align-items: center; padding: 0 0 4px 8px; border-bottom: 1px solid #444; color: #c0c0c0; flex: none; }
.lock-1 { margin-left: 13px; color: #999; }
.lock-2 { margin-left: 13px; color: #888; }
.lock-3 { margin-left: 8px; }
.lock-4 { margin-left: 11px; }
.lock-5 { margin-left: 11px; }
.lock-f { margin-left: 10px; }
.llist { flex: 1; margin-right: 20px; }
.layer { height: 37px; display: flex; border-bottom: 1px solid #444; }
.leye { margin: 9px 11px 0 9px; color: #dcdcdc; }
.lmain { flex: 1; display: flex; align-items: center; padding-left: 2px; border-left: 1px solid #4a4a4a; position: relative; }
.lmain-on { background: #6a6a6a; }
.thumb-t { width: 45px; height: 30px; display: flex; align-items: center; justify-content: center; border: 1px solid #fff; border-image: linear-gradient(90deg, #fff 0 14%, transparent 14% 78%, #fff 78%) 1; }
.lname { margin-left: 10px; font-size: 14px; color: #ececec; }
.thumb-bg { width: 40px; height: 25px; margin-left: 3px; background: #efe6e5; border: 1px solid #2e2e2e; }
.lname-bg { margin-left: 14px; }
.llockic { position: absolute; right: 18px; top: 12px; color: #dcdcdc; }
.lfoot { height: 31px; display: flex; align-items: center; justify-content: flex-end; gap: 16px; padding-right: 33px; border-top: 1px solid #444; color: #9c9c9c; flex: none; }
.lgrip { height: 12px; background: #444; display: flex; justify-content: center; padding-top: 4px; flex: none; }

/* dialog */
.dialog { position: absolute; left: 1051px; top: 363px; width: 669px; height: 503px; background: #535353; border: 1px solid #0078d7; display: flex; flex-direction: column; box-shadow: 0 0 8px rgba(0,0,0,.35); }
.dtitle { height: 37px; background: #fff; color: #111; display: flex; align-items: center; justify-content: space-between; padding: 0 13px 0 9px; font-size: 14px; flex: none; }
.dclose { width: 12px; height: 12px; stroke: #111; stroke-width: 1.100; fill: none; margin-top: 1px; }
.dbody { flex: 1; display: flex; padding-left: 12px; }
.dleft { width: 320px; padding-top: 39px; flex: none; }
.field { width: 320px; height: 320px; position: relative; background: linear-gradient(to top, #000, rgba(0,0,0,0)), linear-gradient(to right, #fff, #f00); }
.gamut { position: absolute; left: 0; top: 0; width: 320px; height: 320px; }
.gray { fill: #9a9a9a; }
.webonly { display: flex; align-items: center; margin-top: 16px; gap: 10px; font-size: 15px; color: #dcdcdc; }
.cbx { width: 15px; height: 15px; border: 1px solid #8a8a8a; border-radius: 2px; }
.hue { width: 24px; height: 320px; margin: 39px 0 0 15px; position: relative; flex: none; background: linear-gradient(#f00 0%, #f0f 16.67%, #00f 33.33%, #0ff 50%, #0f0 66.67%, #ff0 83.33%, #f00 100%); }
.tri { position: absolute; bottom: -5px; width: 9px; height: 10px; background: #f2f2f2; }
.tri-l { left: -10px; clip-path: polygon(0 0, 50% 0, 100% 50%, 50% 100%, 0 100%); }
.tri-r { right: -10px; clip-path: polygon(100% 0, 50% 0, 0 50%, 50% 100%, 100% 100%); }
.dright { margin-left: 16px; width: 281px; flex: none; }
.dtop { display: flex; height: 211px; }
.swatches { width: 138px; padding-top: 38px; flex: none; }
.swlabel { width: 75px; text-align: center; font-size: 14px; color: #dcdcdc; height: 17px; line-height: 17px; margin-top: 0; }
.sw-new { height: 22px; }
.swrow { display: flex; }
.swbox { width: 75px; height: 85px; border: 1px solid #2e2e2e; display: flex; flex-direction: column; flex: none; }
.sw-a { flex: 1; background: #d81717; }
.sw-b { flex: 1; background: #100000; }
.swaux { margin: 47px 0 0 10px; display: flex; flex-direction: column; gap: 2px; align-items: center; }
.cube { color: #bbb; width: 15px; height: 15px; }
.websw { display: block; width: 16px; height: 16px; background: #cc0000; border: 1px solid #eee; }
.dbtns { padding-top: 13px; flex: none; }
.dbtn { width: 130px; height: 31px; border: 1px solid #777; border-radius: 16px; text-align: center; line-height: 29px; font-size: 16px; color: #e6e6e6; margin-bottom: 21px; }
.dbtn-on { border: 2px solid #c0c0c0; line-height: 27px; color: #fff; margin-bottom: 12px; }
.fields { display: flex; }
.fcol { width: 141px; flex: none; }
.fr { display: flex; align-items: center; height: 26px; margin-bottom: 8px; color: #d4d4d4; font-size: 14px; position: relative; }
.fr-gap { margin-bottom: 12px; }
.fr-gap2 { margin-bottom: 14px; }
.radio { width: 16px; height: 16px; border: 1px solid #888; border-radius: 50%; flex: none; }
.radio.on { background: #ddd; border: 0; position: relative; }
.radio.on::after { content: ""; position: absolute; left: 5px; top: 5px; width: 6px; height: 6px; border-radius: 50%; background: #535353; }
.fl { width: 33px; margin-left: 8px; flex: none; }
.fi { width: 44px; height: 26px; flex: none; background: #434343; border: 1px solid #5f5f5f; font-size: 14px; line-height: 24px; padding-left: 4px; color: #e8e8e8; }
.fi-w { width: 53px; }
.fu { margin-left: 6px; }
.fc { width: 49px; text-align: right; padding-right: 8px; flex: none; margin-left: 8px; }
.fp { margin-left: 8px; }
.hash { width: 23px; padding-left: 4px; flex: none; }
.fr-hex { height: 26px; }
.hexin { width: 98px; height: 26px; border: 1px solid #0063b1; background: #434343; padding: 3px 0 0 3px; line-height: 19px; color: #fff; }
.hexsel { background: #0078d7; display: inline-block; height: 19px; }

/* annotations */
.overlay { position: absolute; left: 0; top: 0; width: 1920px; height: 974px; pointer-events: none; fill: none; }
.pick { fill: none; stroke: #fff; stroke-width: 1; }
.redbox { fill: none; stroke: #ff1e0e; stroke-width: 4; }
.redarrow { fill: #ff1e0e; }
.wm { fill: rgba(226,226,226,.78); filter: blur(.5px); }
.wm-baidu { font: 700 79px "Liberation Sans", sans-serif; letter-spacing: 1px; }
.wm-du { font: 700 50px "Liberation Sans", sans-serif; fill: #5a5a5a; }
.wm-cn { font: 700 56px "Noto Sans CJK SC", sans-serif; }
.wm-url { font: 500 41px "Open Sans", sans-serif; }
```
